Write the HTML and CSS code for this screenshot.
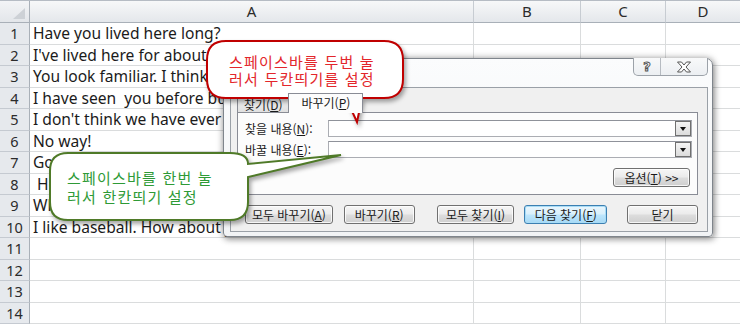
FILE: index.html
```html
<!DOCTYPE html>
<html lang="ko">
<head>
    <meta charset="UTF-8">
    <meta name="viewport" content="width=device-width, initial-scale=1.0">
    <title>찾기 및 바꾸기</title>
    <link rel="stylesheet" href="styles.css">
</head>
<body>
    <div class="sheet">
        <div class="corner"><span class="tri"></span></div>
        <div class="col-head">A</div>
        <div class="col-head">B</div>
        <div class="col-head">C</div>
        <div class="col-head last">D</div>

        <div class="row-head">1</div><div class="cell">Have you lived here long?</div><div class="cell"></div><div class="cell"></div><div class="cell last"></div>
        <div class="row-head">2</div><div class="cell">I've lived here for about five years.</div><div class="cell"></div><div class="cell"></div><div class="cell last"></div>
        <div class="row-head">3</div><div class="cell">You look familiar. I think I know you.</div><div class="cell"></div><div class="cell"></div><div class="cell last"></div>
        <div class="row-head">4</div><div class="cell">I have seen&nbsp; you before but I can't remember where.</div><div class="cell"></div><div class="cell"></div><div class="cell last"></div>
        <div class="row-head">5</div><div class="cell">I don't think we have ever met.</div><div class="cell"></div><div class="cell"></div><div class="cell last"></div>
        <div class="row-head">6</div><div class="cell">No way!</div><div class="cell"></div><div class="cell"></div><div class="cell last"></div>
        <div class="row-head">7</div><div class="cell">Good to see you again.</div><div class="cell"></div><div class="cell"></div><div class="cell last"></div>
        <div class="row-head">8</div><div class="cell">&nbsp;How have you been?</div><div class="cell"></div><div class="cell"></div><div class="cell last"></div>
        <div class="row-head">9</div><div class="cell">What do you do for fun?</div><div class="cell"></div><div class="cell"></div><div class="cell last"></div>
        <div class="row-head">10</div><div class="cell">I like baseball. How about you?</div><div class="cell"></div><div class="cell"></div><div class="cell last"></div>
        <div class="row-head">11</div><div class="cell"></div><div class="cell"></div><div class="cell"></div><div class="cell last"></div>
        <div class="row-head">12</div><div class="cell"></div><div class="cell"></div><div class="cell"></div><div class="cell last"></div>
        <div class="row-head">13</div><div class="cell"></div><div class="cell"></div><div class="cell"></div><div class="cell last"></div>
        <div class="row-head">14</div><div class="cell"></div><div class="cell"></div><div class="cell"></div><div class="cell last"></div>
    </div>

    <!-- find & replace dialog -->
    <div class="dialog">
        <div class="title-bar">
            <div class="caption-btns">
                <span class="cap-btn help">?</span>
                <span class="cap-btn close">
                    <svg width="16" height="12" viewBox="0 0 16 12">
                        <path d="M1.5 1 H5.5 L8 4 L10.5 1 H14.5 L10 6 L14.5 11 H10.5 L8 8 L5.5 11 H1.5 L6 6 Z" fill="#fff" stroke="#555" stroke-width="1"/>
                    </svg>
                </span>
            </div>
        </div>
        <div class="dlg-body">
            <div class="tabs">
                <div class="tab">찾기(<u>D</u>)</div>
                <div class="tab active">바꾸기(<u>P</u>)</div>
            </div>
            <div class="tab-page">
                <div class="field">
                    <span class="label">찾을 내용(<u>N</u>):</span>
                    <div class="combo"><span class="drop"></span></div>
                </div>
                <div class="field">
                    <span class="label">바꿀 내용(<u>E</u>):</span>
                    <div class="combo"><span class="drop"></span></div>
                </div>
                <div class="opt-row">
                    <button class="btn opt">옵션(<u>T</u>) &gt;&gt;</button>
                </div>
            </div>
            <div class="actions">
                <button class="btn w-all-rep">모두 바꾸기(<u>A</u>)</button>
                <button class="btn w-rep">바꾸기(<u>R</u>)</button>
                <button class="btn w-all-find">모두 찾기(<u>I</u>)</button>
                <button class="btn w-next focus">다음 찾기(<u>F</u>)</button>
                <button class="btn w-close">닫기</button>
            </div>
        </div>
    </div>

    <!-- callouts -->
    <div class="callout red">
        <svg class="bubble" width="215" height="95" viewBox="0 0 215 95">
            <path d="M26 6 H184 Q203 6 203 25 V44 Q203 63 184 63 H162 L157 87 L146 63 H26 Q7 63 7 44 V25 Q7 6 26 6 Z" fill="#fff" stroke="#c00000" stroke-width="2"/>
        </svg>
        <div class="callout-text">스페이스바를 두번 눌<br>러서 두칸띄기를 설정</div>
    </div>

    <div class="callout green">
        <svg class="bubble" width="310" height="90" viewBox="0 0 310 90">
            <path d="M28 13 H190 Q208 13 208 24 L301 15 L208 37 V62 Q208 80 190 80 H28 Q10 80 10 62 V31 Q10 13 28 13 Z" fill="#fff" stroke="#4f7a28" stroke-width="2"/>
        </svg>
        <div class="callout-text">스페이스바를 한번 눌<br>러서 한칸띄기 설정</div>
    </div>
</body>
</html>
```

FILE: styles.css
```css
* {
    margin: 0;
    padding: 0;
    box-sizing: border-box;
}
body {
    width: 740px;
    height: 325px;
    overflow: hidden;
    background: #fff;
    position: relative;
    font-family: "Noto Sans", "Noto Sans CJK KR", sans-serif;
}

/* spreadsheet */
.sheet {
    display: grid;
    grid-template-columns: 30px 444px 107px 85px 1fr;
    grid-template-rows: 22px repeat(14, 21.5px);
    border-top: 1px solid #b6bcc4;
}
.corner {
    position: relative;
    background: linear-gradient(#f3f4f6, #e3e6ea);
    border-right: 1px solid #a9b0b8;
    border-bottom: 1px solid #a9b0b8;
}
.corner .tri {
    position: absolute;
    right: 4px;
    bottom: 3px;
    width: 0;
    height: 0;
    border-left: 12px solid transparent;
    border-bottom: 11px solid #cdd1d6;
}
.col-head {
    background: linear-gradient(#f7f8f9, #e4e7eb);
    border-right: 1px solid #c7ccd2;
    border-bottom: 1px solid #a9b0b8;
    text-align: center;
    font-size: 15px;
    line-height: 20px;
    color: #2b2b2b;
}
.col-head.last,
.cell.last {
    border-right: none;
}
.row-head {
    background: #e6e9ed;
    border-right: 1px solid #a9b0b8;
    border-bottom: 1px solid #c5cad1;
    text-align: center;
    font-size: 14.5px;
    line-height: 20px;
    color: #2b2b2b;
}
.cell {
    border-right: 1px solid #dadcdd;
    border-bottom: 1px solid #dadcdd;
    padding-left: 3px;
    font-size: 15.6px;
    line-height: 20px;
    color: #1b1b1b;
    white-space: nowrap;
}

/* dialog */
.dialog {
    position: absolute;
    left: 223px;
    top: 58px;
    width: 490px;
    height: 179px;
    background: linear-gradient(#fbfcfd, #f1f3f5);
    border: 1px solid #7f858c;
    border-radius: 7px 7px 4px 4px;
    box-shadow: 0 0 7px rgba(0, 0, 0, 0.35), 2px 3px 6px rgba(0, 0, 0, 0.25);
    padding: 0 4px 4px 6px;
    display: flex;
    flex-direction: column;
    font-family: "Noto Sans CJK KR", sans-serif;
    font-size: 12px;
    color: #1a1a1a;
}
.title-bar {
    height: 28px;
    display: flex;
    justify-content: flex-end;
}
.caption-btns {
    display: flex;
    height: 18px;
    margin-top: -1px;
    border: 1px solid #9ca2a9;
    border-top: none;
    border-radius: 0 0 5px 5px;
    background: linear-gradient(#f8f9fa, #eceff2);
}
.cap-btn {
    display: flex;
    align-items: center;
    justify-content: center;
    height: 100%;
}
.help {
    width: 27px;
    border-right: 1px solid #b6bbc1;
    font-family: "DejaVu Sans", sans-serif;
    font-weight: bold;
    font-size: 13px;
    color: #fff;
    -webkit-text-stroke: 1px #555;
}
.close {
    width: 46px;
}
.dlg-body {
    flex: 1;
    background: #f0f0f0;
    border: 1px solid #9aa0a7;
    padding: 5px 9px 7px 6px;
    display: flex;
    flex-direction: column;
}
.tabs {
    display: flex;
    align-items: flex-end;
    height: 19px;
}
.tab {
    height: 16px;
    padding: 0 6px;
    border: 1px solid #898c95;
    border-bottom: none;
    background: linear-gradient(#f2f2f2, #e0e0e0);
    line-height: 15px;
    margin-right: -1px;
}
.tab.active {
    position: relative;
    height: 20px;
    margin-bottom: -1px;
    padding: 0 12px;
    background: #fcfcfc;
    line-height: 18px;
    z-index: 1;
}
.tab-page {
    height: 83px;
    background: #fcfcfc;
    border: 1px solid #898c95;
    padding: 7px 5px 0 7px;
}
.field {
    display: flex;
    align-items: center;
    height: 17px;
    margin-bottom: 4px;
}
.label {
    width: 83px;
    line-height: 17px;
}
.combo {
    flex: 1;
    height: 17px;
    position: relative;
    background: #fff;
    border: 1px solid #abadb3;
    border-top-color: #8f929a;
}
.drop {
    position: absolute;
    right: 0;
    top: 0;
    width: 16px;
    height: 15px;
    background: linear-gradient(#f4f4f4, #dcdcdc);
    border: 1px solid #707070;
}
.drop::after {
    content: "";
    position: absolute;
    left: 4px;
    top: 5px;
    border-left: 3.5px solid transparent;
    border-right: 3.5px solid transparent;
    border-top: 4px solid #111;
}
.opt-row {
    display: flex;
    justify-content: flex-end;
    padding-top: 6px;
    padding-right: 2px;
}
.btn {
    height: 19px;
    font-family: "Noto Sans CJK KR", sans-serif;
    font-size: 12px;
    color: #1a1a1a;
    background: linear-gradient(#f6f6f6 0%, #ebebeb 48%, #dddddd 52%, #cfcfcf 100%);
    border: 1px solid #707070;
    border-radius: 3px;
    box-shadow: inset 0 0 0 1px rgba(255, 255, 255, 0.8);
    line-height: 16px;
}
.opt {
    width: 77px;
}
.actions {
    display: flex;
    margin-top: 10px;
    padding-left: 8px;
}
.w-all-rep { width: 88px; margin-right: 11px; }
.w-rep { width: 71px; margin-right: 22px; }
.w-all-find { width: 78px; margin-right: 10px; }
.w-next { width: 83px; margin-right: 20px; }
.w-close { width: 71px; }
.btn.focus {
    border-color: #3c7fb1;
    background: linear-gradient(#eaf6fd 0%, #d9f0fc 48%, #bee6fd 52%, #a7d9f5 100%);
    box-shadow: inset 0 0 0 1px #a8dcf6;
}

/* callouts */
.callout {
    position: absolute;
    font-family: "Noto Sans CJK KR", sans-serif;
    font-size: 15px;
    letter-spacing: 1.2px;
}
.callout .bubble {
    position: absolute;
    left: 0;
    top: 0;
    filter: drop-shadow(2px 3px 2px rgba(0, 0, 0, 0.35));
}
.callout-text {
    position: relative;
    white-space: nowrap;
}
.callout.red {
    left: 200px;
    top: 35px;
    width: 215px;
    height: 95px;
}
.callout.red .callout-text {
    padding: 18px 0 0 29px;
    line-height: 17px;
    color: #e3262b;
}
.callout.green {
    left: 40px;
    top: 140px;
    width: 310px;
    height: 90px;
}
.callout.green .callout-text {
    padding: 28px 0 0 27px;
    line-height: 19px;
    color: #2e9a36;
}
```
